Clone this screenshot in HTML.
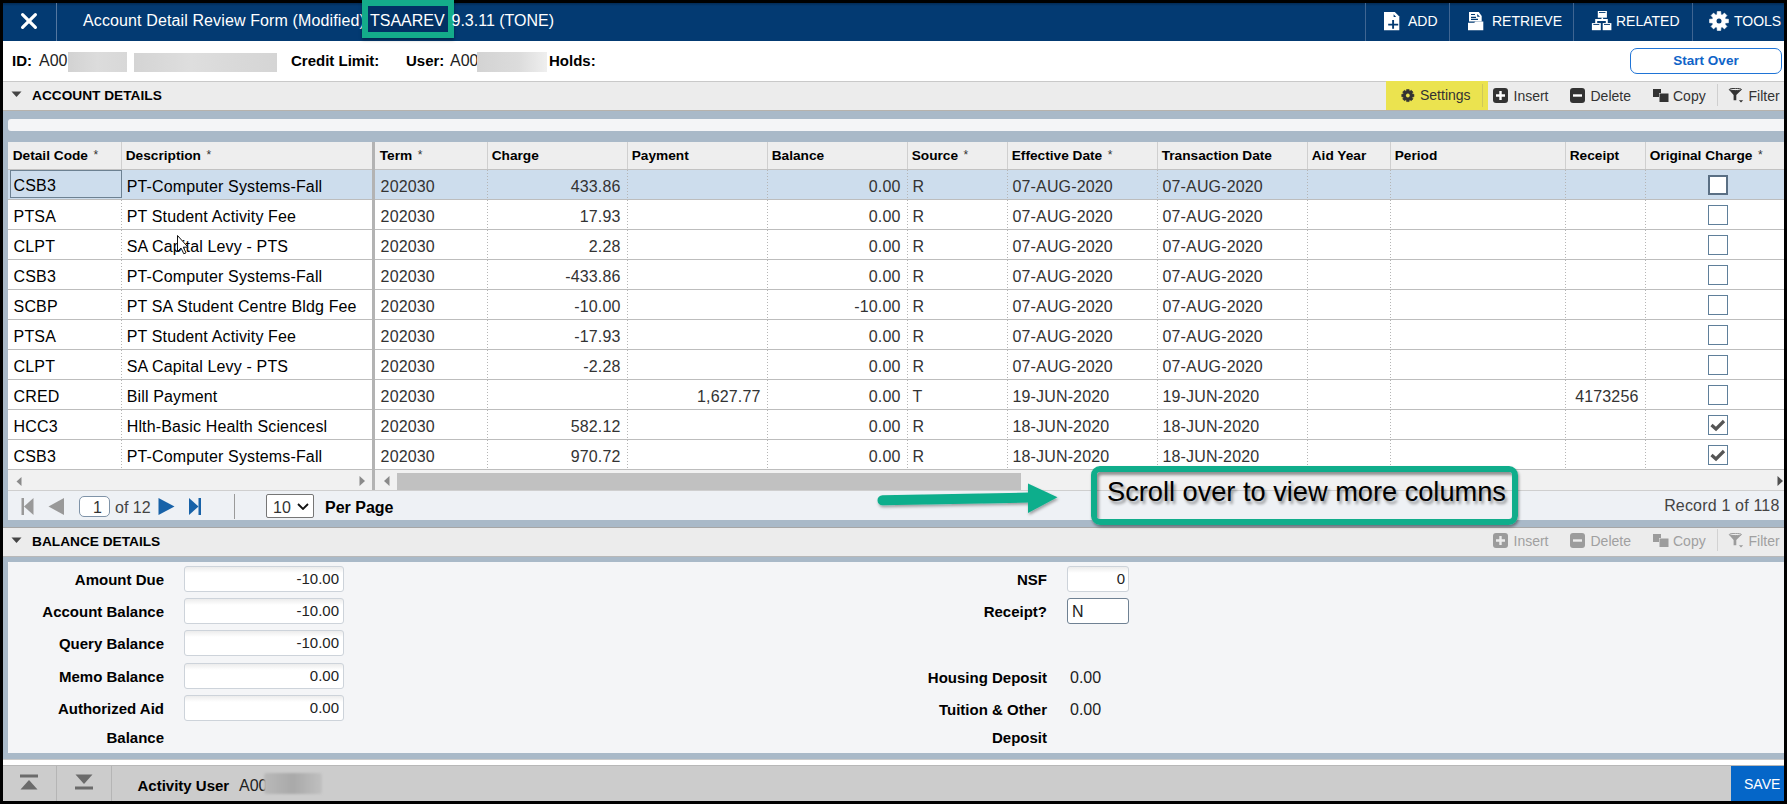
<!DOCTYPE html>
<html><head><meta charset="utf-8"><style>
html,body{margin:0;padding:0;}
body{width:1787px;height:804px;position:relative;overflow:hidden;font-family:"Liberation Sans", sans-serif;}
</style></head><body>
<div style="position:absolute;left:0px;top:0px;width:1787px;height:804px;background:#000"></div><div style="position:absolute;left:3px;top:3px;width:1781px;height:798px;background:#fff"></div><div style="position:absolute;left:3px;top:3px;width:1781px;height:38px;background:#033a72"></div><div style="position:absolute;left:3px;top:3px;width:1781px;height:3px;background:linear-gradient(#022a55,#033a72)"></div><svg style="position:absolute;left:20px;top:12px;" width="18" height="18" viewBox="0 0 18 18"><path d="M2.6 2.6 L15.4 15.4 M15.4 2.6 L2.6 15.4" stroke="#fff" stroke-width="3.2" stroke-linecap="round"/></svg><div style="position:absolute;left:56px;top:3px;width:1px;height:38px;background:#5577a0"></div><div style="position:absolute;left:83px;top:13.06px;font-size:16px;line-height:16px;font-weight:400;color:#fff;white-space:nowrap;letter-spacing:0.12px">Account Detail Review Form (Modified)</div><div style="position:absolute;left:362px;top:0px;width:92px;height:38px;box-sizing:border-box;border:6px solid #14ac8a;background:rgba(0,20,50,0.22);box-shadow:0 2px 3px rgba(0,0,0,0.35)"></div><div style="position:absolute;left:370px;top:13.06px;font-size:16px;line-height:16px;font-weight:400;color:#fff;white-space:nowrap;">TSAAREV</div><div style="position:absolute;left:451.5px;top:13.06px;font-size:16px;line-height:16px;font-weight:400;color:#fff;white-space:nowrap;">9.3.11 (TONE)</div><div style="position:absolute;left:1365px;top:3px;width:1px;height:38px;background:#3f6592"></div><div style="position:absolute;left:1449px;top:3px;width:1px;height:38px;background:#3f6592"></div><div style="position:absolute;left:1573px;top:3px;width:1px;height:38px;background:#3f6592"></div><div style="position:absolute;left:1692px;top:3px;width:1px;height:38px;background:#3f6592"></div><svg style="position:absolute;left:1383px;top:12px;" width="18" height="19" viewBox="0 0 18 19"><path d="M1 0 H11.8 L16.3 4.5 V18.3 H1 Z" fill="#fff"/><path d="M10.6 2.3 L13.2 5 H10.6 Z" fill="#033a72"/><path d="M10.1 8 V16.7 M5.2 12.65 H15.2" stroke="#033a72" stroke-width="1.9"/></svg><div style="position:absolute;left:1408px;top:13.85px;font-size:14px;line-height:14px;font-weight:400;color:#fff;white-space:nowrap;">ADD</div><svg style="position:absolute;left:1467px;top:11px;" width="18" height="20" viewBox="0 0 18 20"><path d="M2 0.9 H11.8 L14.7 5 V10.6 H2 Z" fill="#fff"/><path d="M10.2 3.1 L13 5.7 H10.2 Z" fill="#033a72"/><path d="M4 3.5 H8 M4 6.4 H9 M4 8.3 H11" stroke="#033a72" stroke-width="1.2"/><path d="M1 11.7 H7.2 L8.5 10.5 H16.3 V19.3 H1 Z" fill="#fff"/></svg><div style="position:absolute;left:1492px;top:13.85px;font-size:14px;line-height:14px;font-weight:400;color:#fff;white-space:nowrap;">RETRIEVE</div><svg style="position:absolute;left:1591px;top:11px;" width="21" height="20" viewBox="0 0 21 20"><rect x="6.8" y="0" width="9.1" height="6.7" fill="#fff"/><path d="M8 1.5 H14.5" stroke="#033a72" stroke-width="0.9"/><rect x="10.5" y="6.5" width="1.6" height="2" fill="#fff"/><path d="M5.2 12.2 V9 H15.8 V12.2" stroke="#fff" stroke-width="2" fill="none"/><rect x="0.9" y="12.1" width="8.9" height="7.1" fill="#fff"/><rect x="11.7" y="12.1" width="8.7" height="7.1" fill="#fff"/><path d="M2.3 13.5 H8.3 M13 13.5 H19" stroke="#033a72" stroke-width="0.9"/></svg><div style="position:absolute;left:1616px;top:13.85px;font-size:14px;line-height:14px;font-weight:400;color:#fff;white-space:nowrap;">RELATED</div><svg style="position:absolute;left:1708px;top:10px;" width="22" height="22" viewBox="0 0 22 22"><path d="M17.30,9.02 L20.44,9.26 L20.44,12.74 L17.30,12.98 L16.85,14.05 L18.91,16.44 L16.44,18.91 L14.05,16.85 L12.98,17.30 L12.74,20.44 L9.26,20.44 L9.02,17.30 L7.95,16.85 L5.56,18.91 L3.09,16.44 L5.15,14.05 L4.70,12.98 L1.56,12.74 L1.56,9.26 L4.70,9.02 L5.15,7.95 L3.09,5.56 L5.56,3.09 L7.95,5.15 L9.02,4.70 L9.26,1.56 L12.74,1.56 L12.98,4.70 L14.05,5.15 L16.44,3.09 L18.91,5.56 L16.85,7.95 Z" fill="#fff" stroke="#fff" stroke-width="0.6" stroke-linejoin="round"/><circle cx="11" cy="11" r="6.6" fill="#fff"/><circle cx="11" cy="11" r="2.5" fill="#033a72"/></svg><div style="position:absolute;left:1734px;top:13.85px;font-size:14px;line-height:14px;font-weight:400;color:#fff;white-space:nowrap;">TOOLS</div><div style="position:absolute;left:12px;top:53.20px;font-size:15px;line-height:15px;font-weight:700;color:#000;white-space:nowrap;">ID:</div><div style="position:absolute;left:39px;top:52.96px;font-size:16px;line-height:16px;font-weight:400;color:#222;white-space:nowrap;">A00</div><div style="position:absolute;left:68px;top:52px;width:59px;height:20px;background:linear-gradient(90deg,#d2d2d2,#dcdcdc 50%,#d8d8d8);filter:blur(0.6px)"></div><div style="position:absolute;left:134px;top:53px;width:143px;height:19px;background:linear-gradient(90deg,#d4d4d4,#dedede 40%,#d9d9d9 70%,#d5d5d5);filter:blur(0.6px)"></div><div style="position:absolute;left:291px;top:53.20px;font-size:15px;line-height:15px;font-weight:700;color:#000;white-space:nowrap;">Credit Limit:</div><div style="position:absolute;left:406px;top:53.20px;font-size:15px;line-height:15px;font-weight:700;color:#000;white-space:nowrap;">User:</div><div style="position:absolute;left:450px;top:52.96px;font-size:16px;line-height:16px;font-weight:400;color:#222;white-space:nowrap;">A00</div><div style="position:absolute;left:477px;top:52px;width:70px;height:20px;background:linear-gradient(90deg,#d3d3d3,#dcdcdc 60%,#efefef);filter:blur(0.6px)"></div><div style="position:absolute;left:549px;top:53.20px;font-size:15px;line-height:15px;font-weight:700;color:#000;white-space:nowrap;">Holds:</div><div style="position:absolute;left:1630px;top:48px;width:152px;height:26px;box-sizing:border-box;border:1.5px solid #1f74d6;border-radius:7px;background:#fff"></div><div style="position:absolute;left:1631.0px;width:150px;text-align:center;top:54.07px;font-size:13.5px;line-height:13.5px;font-weight:700;color:#0f64c8;white-space:nowrap;">Start Over</div><div style="position:absolute;left:3px;top:81px;width:1781px;height:1px;background:#c9c9c9"></div><div style="position:absolute;left:3px;top:82px;width:1781px;height:28px;background:#ececec"></div><div style="position:absolute;left:3px;top:110px;width:1781px;height:1px;background:#b6b2ac"></div><svg style="position:absolute;left:11px;top:91px;" width="11" height="7" viewBox="0 0 11 7"><path d="M0.5 0.5 H10.5 L5.5 6 Z" fill="#444"/></svg><div style="position:absolute;left:32px;top:89.40px;font-size:13.7px;line-height:13.7px;font-weight:700;color:#000;white-space:nowrap;">ACCOUNT DETAILS</div><div style="position:absolute;left:1386px;top:81px;width:102px;height:29px;background:#ebe34f"></div><div style="position:absolute;left:1482px;top:84px;width:1px;height:23px;background:#cfc85a"></div><svg style="position:absolute;left:1401px;top:89px;" width="14" height="14" viewBox="0 0 14 14"><path d="M11.18,4.95 L12.92,5.23 L12.92,7.77 L11.18,8.05 L11.01,8.47 L12.04,9.89 L10.24,11.69 L8.82,10.66 L8.40,10.83 L8.12,12.57 L5.58,12.57 L5.30,10.83 L4.88,10.66 L3.46,11.69 L1.66,9.89 L2.69,8.47 L2.52,8.05 L0.78,7.77 L0.78,5.23 L2.52,4.95 L2.69,4.53 L1.66,3.11 L3.46,1.31 L4.88,2.34 L5.30,2.17 L5.58,0.43 L8.12,0.43 L8.40,2.17 L8.82,2.34 L10.24,1.31 L12.04,3.11 L11.01,4.53 Z" fill="#333" stroke="#333" stroke-width="0.6" stroke-linejoin="round"/><circle cx="6.85" cy="6.5" r="4.6" fill="#333"/><circle cx="6.85" cy="6.5" r="1.9" fill="#ebe34f"/></svg><div style="position:absolute;left:1420px;top:88.15px;font-size:14px;line-height:14px;font-weight:400;color:#333;white-space:nowrap;">Settings</div><svg style="position:absolute;left:1493px;top:88px;" width="15" height="15" viewBox="0 0 15 15"><rect x="0" y="0" width="15" height="15" rx="3" fill="#333"/><path d="M7.5 3 V12 M3 7.5 H12" stroke="#fff" stroke-width="2.4"/></svg><div style="position:absolute;left:1513.5px;top:88.65px;font-size:14px;line-height:14px;font-weight:400;color:#333;white-space:nowrap;">Insert</div><svg style="position:absolute;left:1570px;top:88px;" width="15" height="15" viewBox="0 0 15 15"><rect x="0" y="0" width="15" height="15" rx="3" fill="#333"/><path d="M3 7.5 H12" stroke="#fff" stroke-width="2.4"/></svg><div style="position:absolute;left:1590.5px;top:88.65px;font-size:14px;line-height:14px;font-weight:400;color:#333;white-space:nowrap;">Delete</div><svg style="position:absolute;left:1653px;top:89px;" width="16" height="13" viewBox="0 0 16 13"><path d="M0 0 H8 V4 H6 V8 H0 Z" fill="#333"/><rect x="6.5" y="4.5" width="9" height="8.5" fill="#333"/></svg><div style="position:absolute;left:1673px;top:88.65px;font-size:14px;line-height:14px;font-weight:400;color:#333;white-space:nowrap;">Copy</div><div style="position:absolute;left:1717px;top:84px;width:1px;height:22px;background:#cfcfcf"></div><svg style="position:absolute;left:1728px;top:88px;" width="16" height="15" viewBox="0 0 16 15"><path d="M0.8 1.5 L5.6 7 V12.2 H8.3 V7 L13.9 1.5 Z" fill="#333"/><ellipse cx="7.35" cy="1.5" rx="6.1" ry="1.1" fill="#ececec" stroke="#333" stroke-width="1"/><path d="M10.9 12.2 H15.2 L13 14.6 Z" fill="#333"/></svg><div style="position:absolute;left:1748.5px;top:88.65px;font-size:14px;line-height:14px;font-weight:400;color:#333;white-space:nowrap;">Filter</div><div style="position:absolute;left:3px;top:111px;width:1781px;height:31px;background:#a9b9c8"></div><div style="position:absolute;left:3px;top:111px;width:5px;height:416px;background:#a9b9c8"></div><div style="position:absolute;left:8px;top:119px;width:1776px;height:12px;background:#f4f5f7;border-radius:3px 0 0 3px"></div><div style="position:absolute;left:8px;top:142px;width:1776px;height:27px;background:#eeeeee"></div><div style="position:absolute;left:8px;top:169px;width:1776px;height:1px;background:#c2c2c2"></div><div style="position:absolute;left:121px;top:142px;width:1px;height:27px;background:#cfcfcf"></div><div style="position:absolute;left:487px;top:142px;width:1px;height:27px;background:#cfcfcf"></div><div style="position:absolute;left:627px;top:142px;width:1px;height:27px;background:#cfcfcf"></div><div style="position:absolute;left:767px;top:142px;width:1px;height:27px;background:#cfcfcf"></div><div style="position:absolute;left:907px;top:142px;width:1px;height:27px;background:#cfcfcf"></div><div style="position:absolute;left:1007px;top:142px;width:1px;height:27px;background:#cfcfcf"></div><div style="position:absolute;left:1157px;top:142px;width:1px;height:27px;background:#cfcfcf"></div><div style="position:absolute;left:1307px;top:142px;width:1px;height:27px;background:#cfcfcf"></div><div style="position:absolute;left:1390px;top:142px;width:1px;height:27px;background:#cfcfcf"></div><div style="position:absolute;left:1565px;top:142px;width:1px;height:27px;background:#cfcfcf"></div><div style="position:absolute;left:1645px;top:142px;width:1px;height:27px;background:#cfcfcf"></div><div style="position:absolute;left:8px;top:170px;width:1776px;height:29px;background:#cddded"></div><div style="position:absolute;left:8px;top:199px;width:1776px;height:1px;background:#bdbdbd"></div><div style="position:absolute;left:121px;top:170px;width:1px;height:29px;background-image:linear-gradient(#b5b5b5 50%,transparent 50%);background-size:1px 3px"></div><div style="position:absolute;left:487px;top:170px;width:1px;height:29px;background-image:linear-gradient(#b5b5b5 50%,transparent 50%);background-size:1px 3px"></div><div style="position:absolute;left:627px;top:170px;width:1px;height:29px;background-image:linear-gradient(#b5b5b5 50%,transparent 50%);background-size:1px 3px"></div><div style="position:absolute;left:767px;top:170px;width:1px;height:29px;background-image:linear-gradient(#b5b5b5 50%,transparent 50%);background-size:1px 3px"></div><div style="position:absolute;left:907px;top:170px;width:1px;height:29px;background-image:linear-gradient(#b5b5b5 50%,transparent 50%);background-size:1px 3px"></div><div style="position:absolute;left:1007px;top:170px;width:1px;height:29px;background-image:linear-gradient(#b5b5b5 50%,transparent 50%);background-size:1px 3px"></div><div style="position:absolute;left:1157px;top:170px;width:1px;height:29px;background-image:linear-gradient(#b5b5b5 50%,transparent 50%);background-size:1px 3px"></div><div style="position:absolute;left:1307px;top:170px;width:1px;height:29px;background-image:linear-gradient(#b5b5b5 50%,transparent 50%);background-size:1px 3px"></div><div style="position:absolute;left:1390px;top:170px;width:1px;height:29px;background-image:linear-gradient(#b5b5b5 50%,transparent 50%);background-size:1px 3px"></div><div style="position:absolute;left:1565px;top:170px;width:1px;height:29px;background-image:linear-gradient(#b5b5b5 50%,transparent 50%);background-size:1px 3px"></div><div style="position:absolute;left:1645px;top:170px;width:1px;height:29px;background-image:linear-gradient(#b5b5b5 50%,transparent 50%);background-size:1px 3px"></div><div style="position:absolute;left:13.6px;top:178.46px;font-size:16px;line-height:16px;font-weight:400;color:#000;white-space:nowrap;letter-spacing:0.15px">CSB3</div><div style="position:absolute;left:126.7px;top:179.46px;font-size:16px;line-height:16px;font-weight:400;color:#000;white-space:nowrap;letter-spacing:0.15px">PT-Computer Systems-Fall</div><div style="position:absolute;left:380.6px;top:179.46px;font-size:16px;line-height:16px;font-weight:400;color:#333;white-space:nowrap;letter-spacing:0.15px">202030</div><div style="position:absolute;left:20.5px;width:600px;text-align:right;top:179.46px;font-size:16px;line-height:16px;font-weight:400;color:#333;white-space:nowrap;letter-spacing:0.15px">433.86</div><div style="position:absolute;left:300.5px;width:600px;text-align:right;top:179.46px;font-size:16px;line-height:16px;font-weight:400;color:#333;white-space:nowrap;letter-spacing:0.15px">0.00</div><div style="position:absolute;left:912.5px;top:179.46px;font-size:16px;line-height:16px;font-weight:400;color:#333;white-space:nowrap;letter-spacing:0.15px">R</div><div style="position:absolute;left:1012.5px;top:179.46px;font-size:16px;line-height:16px;font-weight:400;color:#333;white-space:nowrap;letter-spacing:0.15px">07-AUG-2020</div><div style="position:absolute;left:1162.5px;top:179.46px;font-size:16px;line-height:16px;font-weight:400;color:#333;white-space:nowrap;letter-spacing:0.15px">07-AUG-2020</div><div style="position:absolute;left:1708px;top:175px;width:20px;height:20px;box-sizing:border-box;border:2px solid #5a6f84;background:#fff"></div><div style="position:absolute;left:8px;top:200px;width:1776px;height:29px;background:#ffffff"></div><div style="position:absolute;left:8px;top:229px;width:1776px;height:1px;background:#bdbdbd"></div><div style="position:absolute;left:121px;top:200px;width:1px;height:29px;background-image:linear-gradient(#b5b5b5 50%,transparent 50%);background-size:1px 3px"></div><div style="position:absolute;left:487px;top:200px;width:1px;height:29px;background-image:linear-gradient(#b5b5b5 50%,transparent 50%);background-size:1px 3px"></div><div style="position:absolute;left:627px;top:200px;width:1px;height:29px;background-image:linear-gradient(#b5b5b5 50%,transparent 50%);background-size:1px 3px"></div><div style="position:absolute;left:767px;top:200px;width:1px;height:29px;background-image:linear-gradient(#b5b5b5 50%,transparent 50%);background-size:1px 3px"></div><div style="position:absolute;left:907px;top:200px;width:1px;height:29px;background-image:linear-gradient(#b5b5b5 50%,transparent 50%);background-size:1px 3px"></div><div style="position:absolute;left:1007px;top:200px;width:1px;height:29px;background-image:linear-gradient(#b5b5b5 50%,transparent 50%);background-size:1px 3px"></div><div style="position:absolute;left:1157px;top:200px;width:1px;height:29px;background-image:linear-gradient(#b5b5b5 50%,transparent 50%);background-size:1px 3px"></div><div style="position:absolute;left:1307px;top:200px;width:1px;height:29px;background-image:linear-gradient(#b5b5b5 50%,transparent 50%);background-size:1px 3px"></div><div style="position:absolute;left:1390px;top:200px;width:1px;height:29px;background-image:linear-gradient(#b5b5b5 50%,transparent 50%);background-size:1px 3px"></div><div style="position:absolute;left:1565px;top:200px;width:1px;height:29px;background-image:linear-gradient(#b5b5b5 50%,transparent 50%);background-size:1px 3px"></div><div style="position:absolute;left:1645px;top:200px;width:1px;height:29px;background-image:linear-gradient(#b5b5b5 50%,transparent 50%);background-size:1px 3px"></div><div style="position:absolute;left:13.6px;top:209.46px;font-size:16px;line-height:16px;font-weight:400;color:#000;white-space:nowrap;letter-spacing:0.15px">PTSA</div><div style="position:absolute;left:126.7px;top:209.46px;font-size:16px;line-height:16px;font-weight:400;color:#000;white-space:nowrap;letter-spacing:0.15px">PT Student Activity Fee</div><div style="position:absolute;left:380.6px;top:209.46px;font-size:16px;line-height:16px;font-weight:400;color:#333;white-space:nowrap;letter-spacing:0.15px">202030</div><div style="position:absolute;left:20.5px;width:600px;text-align:right;top:209.46px;font-size:16px;line-height:16px;font-weight:400;color:#333;white-space:nowrap;letter-spacing:0.15px">17.93</div><div style="position:absolute;left:300.5px;width:600px;text-align:right;top:209.46px;font-size:16px;line-height:16px;font-weight:400;color:#333;white-space:nowrap;letter-spacing:0.15px">0.00</div><div style="position:absolute;left:912.5px;top:209.46px;font-size:16px;line-height:16px;font-weight:400;color:#333;white-space:nowrap;letter-spacing:0.15px">R</div><div style="position:absolute;left:1012.5px;top:209.46px;font-size:16px;line-height:16px;font-weight:400;color:#333;white-space:nowrap;letter-spacing:0.15px">07-AUG-2020</div><div style="position:absolute;left:1162.5px;top:209.46px;font-size:16px;line-height:16px;font-weight:400;color:#333;white-space:nowrap;letter-spacing:0.15px">07-AUG-2020</div><div style="position:absolute;left:1708px;top:205px;width:20px;height:20px;box-sizing:border-box;border:1px solid #5f7f9a;background:#fff"></div><div style="position:absolute;left:8px;top:230px;width:1776px;height:29px;background:#ffffff"></div><div style="position:absolute;left:8px;top:259px;width:1776px;height:1px;background:#bdbdbd"></div><div style="position:absolute;left:121px;top:230px;width:1px;height:29px;background-image:linear-gradient(#b5b5b5 50%,transparent 50%);background-size:1px 3px"></div><div style="position:absolute;left:487px;top:230px;width:1px;height:29px;background-image:linear-gradient(#b5b5b5 50%,transparent 50%);background-size:1px 3px"></div><div style="position:absolute;left:627px;top:230px;width:1px;height:29px;background-image:linear-gradient(#b5b5b5 50%,transparent 50%);background-size:1px 3px"></div><div style="position:absolute;left:767px;top:230px;width:1px;height:29px;background-image:linear-gradient(#b5b5b5 50%,transparent 50%);background-size:1px 3px"></div><div style="position:absolute;left:907px;top:230px;width:1px;height:29px;background-image:linear-gradient(#b5b5b5 50%,transparent 50%);background-size:1px 3px"></div><div style="position:absolute;left:1007px;top:230px;width:1px;height:29px;background-image:linear-gradient(#b5b5b5 50%,transparent 50%);background-size:1px 3px"></div><div style="position:absolute;left:1157px;top:230px;width:1px;height:29px;background-image:linear-gradient(#b5b5b5 50%,transparent 50%);background-size:1px 3px"></div><div style="position:absolute;left:1307px;top:230px;width:1px;height:29px;background-image:linear-gradient(#b5b5b5 50%,transparent 50%);background-size:1px 3px"></div><div style="position:absolute;left:1390px;top:230px;width:1px;height:29px;background-image:linear-gradient(#b5b5b5 50%,transparent 50%);background-size:1px 3px"></div><div style="position:absolute;left:1565px;top:230px;width:1px;height:29px;background-image:linear-gradient(#b5b5b5 50%,transparent 50%);background-size:1px 3px"></div><div style="position:absolute;left:1645px;top:230px;width:1px;height:29px;background-image:linear-gradient(#b5b5b5 50%,transparent 50%);background-size:1px 3px"></div><div style="position:absolute;left:13.6px;top:239.46px;font-size:16px;line-height:16px;font-weight:400;color:#000;white-space:nowrap;letter-spacing:0.15px">CLPT</div><div style="position:absolute;left:126.7px;top:239.46px;font-size:16px;line-height:16px;font-weight:400;color:#000;white-space:nowrap;letter-spacing:0.15px">SA Capital Levy - PTS</div><div style="position:absolute;left:380.6px;top:239.46px;font-size:16px;line-height:16px;font-weight:400;color:#333;white-space:nowrap;letter-spacing:0.15px">202030</div><div style="position:absolute;left:20.5px;width:600px;text-align:right;top:239.46px;font-size:16px;line-height:16px;font-weight:400;color:#333;white-space:nowrap;letter-spacing:0.15px">2.28</div><div style="position:absolute;left:300.5px;width:600px;text-align:right;top:239.46px;font-size:16px;line-height:16px;font-weight:400;color:#333;white-space:nowrap;letter-spacing:0.15px">0.00</div><div style="position:absolute;left:912.5px;top:239.46px;font-size:16px;line-height:16px;font-weight:400;color:#333;white-space:nowrap;letter-spacing:0.15px">R</div><div style="position:absolute;left:1012.5px;top:239.46px;font-size:16px;line-height:16px;font-weight:400;color:#333;white-space:nowrap;letter-spacing:0.15px">07-AUG-2020</div><div style="position:absolute;left:1162.5px;top:239.46px;font-size:16px;line-height:16px;font-weight:400;color:#333;white-space:nowrap;letter-spacing:0.15px">07-AUG-2020</div><div style="position:absolute;left:1708px;top:235px;width:20px;height:20px;box-sizing:border-box;border:1px solid #5f7f9a;background:#fff"></div><div style="position:absolute;left:8px;top:260px;width:1776px;height:29px;background:#ffffff"></div><div style="position:absolute;left:8px;top:289px;width:1776px;height:1px;background:#bdbdbd"></div><div style="position:absolute;left:121px;top:260px;width:1px;height:29px;background-image:linear-gradient(#b5b5b5 50%,transparent 50%);background-size:1px 3px"></div><div style="position:absolute;left:487px;top:260px;width:1px;height:29px;background-image:linear-gradient(#b5b5b5 50%,transparent 50%);background-size:1px 3px"></div><div style="position:absolute;left:627px;top:260px;width:1px;height:29px;background-image:linear-gradient(#b5b5b5 50%,transparent 50%);background-size:1px 3px"></div><div style="position:absolute;left:767px;top:260px;width:1px;height:29px;background-image:linear-gradient(#b5b5b5 50%,transparent 50%);background-size:1px 3px"></div><div style="position:absolute;left:907px;top:260px;width:1px;height:29px;background-image:linear-gradient(#b5b5b5 50%,transparent 50%);background-size:1px 3px"></div><div style="position:absolute;left:1007px;top:260px;width:1px;height:29px;background-image:linear-gradient(#b5b5b5 50%,transparent 50%);background-size:1px 3px"></div><div style="position:absolute;left:1157px;top:260px;width:1px;height:29px;background-image:linear-gradient(#b5b5b5 50%,transparent 50%);background-size:1px 3px"></div><div style="position:absolute;left:1307px;top:260px;width:1px;height:29px;background-image:linear-gradient(#b5b5b5 50%,transparent 50%);background-size:1px 3px"></div><div style="position:absolute;left:1390px;top:260px;width:1px;height:29px;background-image:linear-gradient(#b5b5b5 50%,transparent 50%);background-size:1px 3px"></div><div style="position:absolute;left:1565px;top:260px;width:1px;height:29px;background-image:linear-gradient(#b5b5b5 50%,transparent 50%);background-size:1px 3px"></div><div style="position:absolute;left:1645px;top:260px;width:1px;height:29px;background-image:linear-gradient(#b5b5b5 50%,transparent 50%);background-size:1px 3px"></div><div style="position:absolute;left:13.6px;top:269.46px;font-size:16px;line-height:16px;font-weight:400;color:#000;white-space:nowrap;letter-spacing:0.15px">CSB3</div><div style="position:absolute;left:126.7px;top:269.46px;font-size:16px;line-height:16px;font-weight:400;color:#000;white-space:nowrap;letter-spacing:0.15px">PT-Computer Systems-Fall</div><div style="position:absolute;left:380.6px;top:269.46px;font-size:16px;line-height:16px;font-weight:400;color:#333;white-space:nowrap;letter-spacing:0.15px">202030</div><div style="position:absolute;left:20.5px;width:600px;text-align:right;top:269.46px;font-size:16px;line-height:16px;font-weight:400;color:#333;white-space:nowrap;letter-spacing:0.15px">-433.86</div><div style="position:absolute;left:300.5px;width:600px;text-align:right;top:269.46px;font-size:16px;line-height:16px;font-weight:400;color:#333;white-space:nowrap;letter-spacing:0.15px">0.00</div><div style="position:absolute;left:912.5px;top:269.46px;font-size:16px;line-height:16px;font-weight:400;color:#333;white-space:nowrap;letter-spacing:0.15px">R</div><div style="position:absolute;left:1012.5px;top:269.46px;font-size:16px;line-height:16px;font-weight:400;color:#333;white-space:nowrap;letter-spacing:0.15px">07-AUG-2020</div><div style="position:absolute;left:1162.5px;top:269.46px;font-size:16px;line-height:16px;font-weight:400;color:#333;white-space:nowrap;letter-spacing:0.15px">07-AUG-2020</div><div style="position:absolute;left:1708px;top:265px;width:20px;height:20px;box-sizing:border-box;border:1px solid #5f7f9a;background:#fff"></div><div style="position:absolute;left:8px;top:290px;width:1776px;height:29px;background:#ffffff"></div><div style="position:absolute;left:8px;top:319px;width:1776px;height:1px;background:#bdbdbd"></div><div style="position:absolute;left:121px;top:290px;width:1px;height:29px;background-image:linear-gradient(#b5b5b5 50%,transparent 50%);background-size:1px 3px"></div><div style="position:absolute;left:487px;top:290px;width:1px;height:29px;background-image:linear-gradient(#b5b5b5 50%,transparent 50%);background-size:1px 3px"></div><div style="position:absolute;left:627px;top:290px;width:1px;height:29px;background-image:linear-gradient(#b5b5b5 50%,transparent 50%);background-size:1px 3px"></div><div style="position:absolute;left:767px;top:290px;width:1px;height:29px;background-image:linear-gradient(#b5b5b5 50%,transparent 50%);background-size:1px 3px"></div><div style="position:absolute;left:907px;top:290px;width:1px;height:29px;background-image:linear-gradient(#b5b5b5 50%,transparent 50%);background-size:1px 3px"></div><div style="position:absolute;left:1007px;top:290px;width:1px;height:29px;background-image:linear-gradient(#b5b5b5 50%,transparent 50%);background-size:1px 3px"></div><div style="position:absolute;left:1157px;top:290px;width:1px;height:29px;background-image:linear-gradient(#b5b5b5 50%,transparent 50%);background-size:1px 3px"></div><div style="position:absolute;left:1307px;top:290px;width:1px;height:29px;background-image:linear-gradient(#b5b5b5 50%,transparent 50%);background-size:1px 3px"></div><div style="position:absolute;left:1390px;top:290px;width:1px;height:29px;background-image:linear-gradient(#b5b5b5 50%,transparent 50%);background-size:1px 3px"></div><div style="position:absolute;left:1565px;top:290px;width:1px;height:29px;background-image:linear-gradient(#b5b5b5 50%,transparent 50%);background-size:1px 3px"></div><div style="position:absolute;left:1645px;top:290px;width:1px;height:29px;background-image:linear-gradient(#b5b5b5 50%,transparent 50%);background-size:1px 3px"></div><div style="position:absolute;left:13.6px;top:299.46px;font-size:16px;line-height:16px;font-weight:400;color:#000;white-space:nowrap;letter-spacing:0.15px">SCBP</div><div style="position:absolute;left:126.7px;top:299.46px;font-size:16px;line-height:16px;font-weight:400;color:#000;white-space:nowrap;letter-spacing:0.15px">PT SA Student Centre Bldg Fee</div><div style="position:absolute;left:380.6px;top:299.46px;font-size:16px;line-height:16px;font-weight:400;color:#333;white-space:nowrap;letter-spacing:0.15px">202030</div><div style="position:absolute;left:20.5px;width:600px;text-align:right;top:299.46px;font-size:16px;line-height:16px;font-weight:400;color:#333;white-space:nowrap;letter-spacing:0.15px">-10.00</div><div style="position:absolute;left:300.5px;width:600px;text-align:right;top:299.46px;font-size:16px;line-height:16px;font-weight:400;color:#333;white-space:nowrap;letter-spacing:0.15px">-10.00</div><div style="position:absolute;left:912.5px;top:299.46px;font-size:16px;line-height:16px;font-weight:400;color:#333;white-space:nowrap;letter-spacing:0.15px">R</div><div style="position:absolute;left:1012.5px;top:299.46px;font-size:16px;line-height:16px;font-weight:400;color:#333;white-space:nowrap;letter-spacing:0.15px">07-AUG-2020</div><div style="position:absolute;left:1162.5px;top:299.46px;font-size:16px;line-height:16px;font-weight:400;color:#333;white-space:nowrap;letter-spacing:0.15px">07-AUG-2020</div><div style="position:absolute;left:1708px;top:295px;width:20px;height:20px;box-sizing:border-box;border:1px solid #5f7f9a;background:#fff"></div><div style="position:absolute;left:8px;top:320px;width:1776px;height:29px;background:#ffffff"></div><div style="position:absolute;left:8px;top:349px;width:1776px;height:1px;background:#bdbdbd"></div><div style="position:absolute;left:121px;top:320px;width:1px;height:29px;background-image:linear-gradient(#b5b5b5 50%,transparent 50%);background-size:1px 3px"></div><div style="position:absolute;left:487px;top:320px;width:1px;height:29px;background-image:linear-gradient(#b5b5b5 50%,transparent 50%);background-size:1px 3px"></div><div style="position:absolute;left:627px;top:320px;width:1px;height:29px;background-image:linear-gradient(#b5b5b5 50%,transparent 50%);background-size:1px 3px"></div><div style="position:absolute;left:767px;top:320px;width:1px;height:29px;background-image:linear-gradient(#b5b5b5 50%,transparent 50%);background-size:1px 3px"></div><div style="position:absolute;left:907px;top:320px;width:1px;height:29px;background-image:linear-gradient(#b5b5b5 50%,transparent 50%);background-size:1px 3px"></div><div style="position:absolute;left:1007px;top:320px;width:1px;height:29px;background-image:linear-gradient(#b5b5b5 50%,transparent 50%);background-size:1px 3px"></div><div style="position:absolute;left:1157px;top:320px;width:1px;height:29px;background-image:linear-gradient(#b5b5b5 50%,transparent 50%);background-size:1px 3px"></div><div style="position:absolute;left:1307px;top:320px;width:1px;height:29px;background-image:linear-gradient(#b5b5b5 50%,transparent 50%);background-size:1px 3px"></div><div style="position:absolute;left:1390px;top:320px;width:1px;height:29px;background-image:linear-gradient(#b5b5b5 50%,transparent 50%);background-size:1px 3px"></div><div style="position:absolute;left:1565px;top:320px;width:1px;height:29px;background-image:linear-gradient(#b5b5b5 50%,transparent 50%);background-size:1px 3px"></div><div style="position:absolute;left:1645px;top:320px;width:1px;height:29px;background-image:linear-gradient(#b5b5b5 50%,transparent 50%);background-size:1px 3px"></div><div style="position:absolute;left:13.6px;top:329.46px;font-size:16px;line-height:16px;font-weight:400;color:#000;white-space:nowrap;letter-spacing:0.15px">PTSA</div><div style="position:absolute;left:126.7px;top:329.46px;font-size:16px;line-height:16px;font-weight:400;color:#000;white-space:nowrap;letter-spacing:0.15px">PT Student Activity Fee</div><div style="position:absolute;left:380.6px;top:329.46px;font-size:16px;line-height:16px;font-weight:400;color:#333;white-space:nowrap;letter-spacing:0.15px">202030</div><div style="position:absolute;left:20.5px;width:600px;text-align:right;top:329.46px;font-size:16px;line-height:16px;font-weight:400;color:#333;white-space:nowrap;letter-spacing:0.15px">-17.93</div><div style="position:absolute;left:300.5px;width:600px;text-align:right;top:329.46px;font-size:16px;line-height:16px;font-weight:400;color:#333;white-space:nowrap;letter-spacing:0.15px">0.00</div><div style="position:absolute;left:912.5px;top:329.46px;font-size:16px;line-height:16px;font-weight:400;color:#333;white-space:nowrap;letter-spacing:0.15px">R</div><div style="position:absolute;left:1012.5px;top:329.46px;font-size:16px;line-height:16px;font-weight:400;color:#333;white-space:nowrap;letter-spacing:0.15px">07-AUG-2020</div><div style="position:absolute;left:1162.5px;top:329.46px;font-size:16px;line-height:16px;font-weight:400;color:#333;white-space:nowrap;letter-spacing:0.15px">07-AUG-2020</div><div style="position:absolute;left:1708px;top:325px;width:20px;height:20px;box-sizing:border-box;border:1px solid #5f7f9a;background:#fff"></div><div style="position:absolute;left:8px;top:350px;width:1776px;height:29px;background:#ffffff"></div><div style="position:absolute;left:8px;top:379px;width:1776px;height:1px;background:#bdbdbd"></div><div style="position:absolute;left:121px;top:350px;width:1px;height:29px;background-image:linear-gradient(#b5b5b5 50%,transparent 50%);background-size:1px 3px"></div><div style="position:absolute;left:487px;top:350px;width:1px;height:29px;background-image:linear-gradient(#b5b5b5 50%,transparent 50%);background-size:1px 3px"></div><div style="position:absolute;left:627px;top:350px;width:1px;height:29px;background-image:linear-gradient(#b5b5b5 50%,transparent 50%);background-size:1px 3px"></div><div style="position:absolute;left:767px;top:350px;width:1px;height:29px;background-image:linear-gradient(#b5b5b5 50%,transparent 50%);background-size:1px 3px"></div><div style="position:absolute;left:907px;top:350px;width:1px;height:29px;background-image:linear-gradient(#b5b5b5 50%,transparent 50%);background-size:1px 3px"></div><div style="position:absolute;left:1007px;top:350px;width:1px;height:29px;background-image:linear-gradient(#b5b5b5 50%,transparent 50%);background-size:1px 3px"></div><div style="position:absolute;left:1157px;top:350px;width:1px;height:29px;background-image:linear-gradient(#b5b5b5 50%,transparent 50%);background-size:1px 3px"></div><div style="position:absolute;left:1307px;top:350px;width:1px;height:29px;background-image:linear-gradient(#b5b5b5 50%,transparent 50%);background-size:1px 3px"></div><div style="position:absolute;left:1390px;top:350px;width:1px;height:29px;background-image:linear-gradient(#b5b5b5 50%,transparent 50%);background-size:1px 3px"></div><div style="position:absolute;left:1565px;top:350px;width:1px;height:29px;background-image:linear-gradient(#b5b5b5 50%,transparent 50%);background-size:1px 3px"></div><div style="position:absolute;left:1645px;top:350px;width:1px;height:29px;background-image:linear-gradient(#b5b5b5 50%,transparent 50%);background-size:1px 3px"></div><div style="position:absolute;left:13.6px;top:359.46px;font-size:16px;line-height:16px;font-weight:400;color:#000;white-space:nowrap;letter-spacing:0.15px">CLPT</div><div style="position:absolute;left:126.7px;top:359.46px;font-size:16px;line-height:16px;font-weight:400;color:#000;white-space:nowrap;letter-spacing:0.15px">SA Capital Levy - PTS</div><div style="position:absolute;left:380.6px;top:359.46px;font-size:16px;line-height:16px;font-weight:400;color:#333;white-space:nowrap;letter-spacing:0.15px">202030</div><div style="position:absolute;left:20.5px;width:600px;text-align:right;top:359.46px;font-size:16px;line-height:16px;font-weight:400;color:#333;white-space:nowrap;letter-spacing:0.15px">-2.28</div><div style="position:absolute;left:300.5px;width:600px;text-align:right;top:359.46px;font-size:16px;line-height:16px;font-weight:400;color:#333;white-space:nowrap;letter-spacing:0.15px">0.00</div><div style="position:absolute;left:912.5px;top:359.46px;font-size:16px;line-height:16px;font-weight:400;color:#333;white-space:nowrap;letter-spacing:0.15px">R</div><div style="position:absolute;left:1012.5px;top:359.46px;font-size:16px;line-height:16px;font-weight:400;color:#333;white-space:nowrap;letter-spacing:0.15px">07-AUG-2020</div><div style="position:absolute;left:1162.5px;top:359.46px;font-size:16px;line-height:16px;font-weight:400;color:#333;white-space:nowrap;letter-spacing:0.15px">07-AUG-2020</div><div style="position:absolute;left:1708px;top:355px;width:20px;height:20px;box-sizing:border-box;border:1px solid #5f7f9a;background:#fff"></div><div style="position:absolute;left:8px;top:380px;width:1776px;height:29px;background:#ffffff"></div><div style="position:absolute;left:8px;top:409px;width:1776px;height:1px;background:#bdbdbd"></div><div style="position:absolute;left:121px;top:380px;width:1px;height:29px;background-image:linear-gradient(#b5b5b5 50%,transparent 50%);background-size:1px 3px"></div><div style="position:absolute;left:487px;top:380px;width:1px;height:29px;background-image:linear-gradient(#b5b5b5 50%,transparent 50%);background-size:1px 3px"></div><div style="position:absolute;left:627px;top:380px;width:1px;height:29px;background-image:linear-gradient(#b5b5b5 50%,transparent 50%);background-size:1px 3px"></div><div style="position:absolute;left:767px;top:380px;width:1px;height:29px;background-image:linear-gradient(#b5b5b5 50%,transparent 50%);background-size:1px 3px"></div><div style="position:absolute;left:907px;top:380px;width:1px;height:29px;background-image:linear-gradient(#b5b5b5 50%,transparent 50%);background-size:1px 3px"></div><div style="position:absolute;left:1007px;top:380px;width:1px;height:29px;background-image:linear-gradient(#b5b5b5 50%,transparent 50%);background-size:1px 3px"></div><div style="position:absolute;left:1157px;top:380px;width:1px;height:29px;background-image:linear-gradient(#b5b5b5 50%,transparent 50%);background-size:1px 3px"></div><div style="position:absolute;left:1307px;top:380px;width:1px;height:29px;background-image:linear-gradient(#b5b5b5 50%,transparent 50%);background-size:1px 3px"></div><div style="position:absolute;left:1390px;top:380px;width:1px;height:29px;background-image:linear-gradient(#b5b5b5 50%,transparent 50%);background-size:1px 3px"></div><div style="position:absolute;left:1565px;top:380px;width:1px;height:29px;background-image:linear-gradient(#b5b5b5 50%,transparent 50%);background-size:1px 3px"></div><div style="position:absolute;left:1645px;top:380px;width:1px;height:29px;background-image:linear-gradient(#b5b5b5 50%,transparent 50%);background-size:1px 3px"></div><div style="position:absolute;left:13.6px;top:389.46px;font-size:16px;line-height:16px;font-weight:400;color:#000;white-space:nowrap;letter-spacing:0.15px">CRED</div><div style="position:absolute;left:126.7px;top:389.46px;font-size:16px;line-height:16px;font-weight:400;color:#000;white-space:nowrap;letter-spacing:0.15px">Bill Payment</div><div style="position:absolute;left:380.6px;top:389.46px;font-size:16px;line-height:16px;font-weight:400;color:#333;white-space:nowrap;letter-spacing:0.15px">202030</div><div style="position:absolute;left:160.5px;width:600px;text-align:right;top:389.46px;font-size:16px;line-height:16px;font-weight:400;color:#333;white-space:nowrap;letter-spacing:0.15px">1,627.77</div><div style="position:absolute;left:300.5px;width:600px;text-align:right;top:389.46px;font-size:16px;line-height:16px;font-weight:400;color:#333;white-space:nowrap;letter-spacing:0.15px">0.00</div><div style="position:absolute;left:912.5px;top:389.46px;font-size:16px;line-height:16px;font-weight:400;color:#333;white-space:nowrap;letter-spacing:0.15px">T</div><div style="position:absolute;left:1012.5px;top:389.46px;font-size:16px;line-height:16px;font-weight:400;color:#333;white-space:nowrap;letter-spacing:0.15px">19-JUN-2020</div><div style="position:absolute;left:1162.5px;top:389.46px;font-size:16px;line-height:16px;font-weight:400;color:#333;white-space:nowrap;letter-spacing:0.15px">19-JUN-2020</div><div style="position:absolute;left:1038.5px;width:600px;text-align:right;top:389.46px;font-size:16px;line-height:16px;font-weight:400;color:#333;white-space:nowrap;letter-spacing:0.15px">4173256</div><div style="position:absolute;left:1708px;top:385px;width:20px;height:20px;box-sizing:border-box;border:1px solid #5f7f9a;background:#fff"></div><div style="position:absolute;left:8px;top:410px;width:1776px;height:29px;background:#ffffff"></div><div style="position:absolute;left:8px;top:439px;width:1776px;height:1px;background:#bdbdbd"></div><div style="position:absolute;left:121px;top:410px;width:1px;height:29px;background-image:linear-gradient(#b5b5b5 50%,transparent 50%);background-size:1px 3px"></div><div style="position:absolute;left:487px;top:410px;width:1px;height:29px;background-image:linear-gradient(#b5b5b5 50%,transparent 50%);background-size:1px 3px"></div><div style="position:absolute;left:627px;top:410px;width:1px;height:29px;background-image:linear-gradient(#b5b5b5 50%,transparent 50%);background-size:1px 3px"></div><div style="position:absolute;left:767px;top:410px;width:1px;height:29px;background-image:linear-gradient(#b5b5b5 50%,transparent 50%);background-size:1px 3px"></div><div style="position:absolute;left:907px;top:410px;width:1px;height:29px;background-image:linear-gradient(#b5b5b5 50%,transparent 50%);background-size:1px 3px"></div><div style="position:absolute;left:1007px;top:410px;width:1px;height:29px;background-image:linear-gradient(#b5b5b5 50%,transparent 50%);background-size:1px 3px"></div><div style="position:absolute;left:1157px;top:410px;width:1px;height:29px;background-image:linear-gradient(#b5b5b5 50%,transparent 50%);background-size:1px 3px"></div><div style="position:absolute;left:1307px;top:410px;width:1px;height:29px;background-image:linear-gradient(#b5b5b5 50%,transparent 50%);background-size:1px 3px"></div><div style="position:absolute;left:1390px;top:410px;width:1px;height:29px;background-image:linear-gradient(#b5b5b5 50%,transparent 50%);background-size:1px 3px"></div><div style="position:absolute;left:1565px;top:410px;width:1px;height:29px;background-image:linear-gradient(#b5b5b5 50%,transparent 50%);background-size:1px 3px"></div><div style="position:absolute;left:1645px;top:410px;width:1px;height:29px;background-image:linear-gradient(#b5b5b5 50%,transparent 50%);background-size:1px 3px"></div><div style="position:absolute;left:13.6px;top:419.46px;font-size:16px;line-height:16px;font-weight:400;color:#000;white-space:nowrap;letter-spacing:0.15px">HCC3</div><div style="position:absolute;left:126.7px;top:419.46px;font-size:16px;line-height:16px;font-weight:400;color:#000;white-space:nowrap;letter-spacing:0.15px">Hlth-Basic Health Sciencesl</div><div style="position:absolute;left:380.6px;top:419.46px;font-size:16px;line-height:16px;font-weight:400;color:#333;white-space:nowrap;letter-spacing:0.15px">202030</div><div style="position:absolute;left:20.5px;width:600px;text-align:right;top:419.46px;font-size:16px;line-height:16px;font-weight:400;color:#333;white-space:nowrap;letter-spacing:0.15px">582.12</div><div style="position:absolute;left:300.5px;width:600px;text-align:right;top:419.46px;font-size:16px;line-height:16px;font-weight:400;color:#333;white-space:nowrap;letter-spacing:0.15px">0.00</div><div style="position:absolute;left:912.5px;top:419.46px;font-size:16px;line-height:16px;font-weight:400;color:#333;white-space:nowrap;letter-spacing:0.15px">R</div><div style="position:absolute;left:1012.5px;top:419.46px;font-size:16px;line-height:16px;font-weight:400;color:#333;white-space:nowrap;letter-spacing:0.15px">18-JUN-2020</div><div style="position:absolute;left:1162.5px;top:419.46px;font-size:16px;line-height:16px;font-weight:400;color:#333;white-space:nowrap;letter-spacing:0.15px">18-JUN-2020</div><div style="position:absolute;left:1708px;top:415px;width:20px;height:20px;box-sizing:border-box;border:1px solid #5f7f9a;background:#fff"></div><svg style="position:absolute;left:1708px;top:415px;" width="20" height="20" viewBox="0 0 20 20"><path d="M3.5 10 L8 14 L16 6" stroke="#555" stroke-width="3.2" fill="none"/></svg><div style="position:absolute;left:8px;top:440px;width:1776px;height:29px;background:#ffffff"></div><div style="position:absolute;left:8px;top:469px;width:1776px;height:1px;background:#bdbdbd"></div><div style="position:absolute;left:121px;top:440px;width:1px;height:29px;background-image:linear-gradient(#b5b5b5 50%,transparent 50%);background-size:1px 3px"></div><div style="position:absolute;left:487px;top:440px;width:1px;height:29px;background-image:linear-gradient(#b5b5b5 50%,transparent 50%);background-size:1px 3px"></div><div style="position:absolute;left:627px;top:440px;width:1px;height:29px;background-image:linear-gradient(#b5b5b5 50%,transparent 50%);background-size:1px 3px"></div><div style="position:absolute;left:767px;top:440px;width:1px;height:29px;background-image:linear-gradient(#b5b5b5 50%,transparent 50%);background-size:1px 3px"></div><div style="position:absolute;left:907px;top:440px;width:1px;height:29px;background-image:linear-gradient(#b5b5b5 50%,transparent 50%);background-size:1px 3px"></div><div style="position:absolute;left:1007px;top:440px;width:1px;height:29px;background-image:linear-gradient(#b5b5b5 50%,transparent 50%);background-size:1px 3px"></div><div style="position:absolute;left:1157px;top:440px;width:1px;height:29px;background-image:linear-gradient(#b5b5b5 50%,transparent 50%);background-size:1px 3px"></div><div style="position:absolute;left:1307px;top:440px;width:1px;height:29px;background-image:linear-gradient(#b5b5b5 50%,transparent 50%);background-size:1px 3px"></div><div style="position:absolute;left:1390px;top:440px;width:1px;height:29px;background-image:linear-gradient(#b5b5b5 50%,transparent 50%);background-size:1px 3px"></div><div style="position:absolute;left:1565px;top:440px;width:1px;height:29px;background-image:linear-gradient(#b5b5b5 50%,transparent 50%);background-size:1px 3px"></div><div style="position:absolute;left:1645px;top:440px;width:1px;height:29px;background-image:linear-gradient(#b5b5b5 50%,transparent 50%);background-size:1px 3px"></div><div style="position:absolute;left:13.6px;top:449.46px;font-size:16px;line-height:16px;font-weight:400;color:#000;white-space:nowrap;letter-spacing:0.15px">CSB3</div><div style="position:absolute;left:126.7px;top:449.46px;font-size:16px;line-height:16px;font-weight:400;color:#000;white-space:nowrap;letter-spacing:0.15px">PT-Computer Systems-Fall</div><div style="position:absolute;left:380.6px;top:449.46px;font-size:16px;line-height:16px;font-weight:400;color:#333;white-space:nowrap;letter-spacing:0.15px">202030</div><div style="position:absolute;left:20.5px;width:600px;text-align:right;top:449.46px;font-size:16px;line-height:16px;font-weight:400;color:#333;white-space:nowrap;letter-spacing:0.15px">970.72</div><div style="position:absolute;left:300.5px;width:600px;text-align:right;top:449.46px;font-size:16px;line-height:16px;font-weight:400;color:#333;white-space:nowrap;letter-spacing:0.15px">0.00</div><div style="position:absolute;left:912.5px;top:449.46px;font-size:16px;line-height:16px;font-weight:400;color:#333;white-space:nowrap;letter-spacing:0.15px">R</div><div style="position:absolute;left:1012.5px;top:449.46px;font-size:16px;line-height:16px;font-weight:400;color:#333;white-space:nowrap;letter-spacing:0.15px">18-JUN-2020</div><div style="position:absolute;left:1162.5px;top:449.46px;font-size:16px;line-height:16px;font-weight:400;color:#333;white-space:nowrap;letter-spacing:0.15px">18-JUN-2020</div><div style="position:absolute;left:1708px;top:445px;width:20px;height:20px;box-sizing:border-box;border:1px solid #5f7f9a;background:#fff"></div><svg style="position:absolute;left:1708px;top:445px;" width="20" height="20" viewBox="0 0 20 20"><path d="M3.5 10 L8 14 L16 6" stroke="#555" stroke-width="3.2" fill="none"/></svg><div style="position:absolute;left:10px;top:170px;width:112px;height:28px;box-sizing:border-box;border:1.5px solid #6d8192;background:transparent"></div><div style="position:absolute;left:12.7px;top:148.60px;font-size:13.7px;line-height:13.7px;font-weight:700;color:#000;white-space:nowrap;">Detail Code<span style="font-weight:400;font-size:12px;margin-left:5.5px;position:relative;top:-1px;color:#333">*</span></div><div style="position:absolute;left:125.7px;top:148.60px;font-size:13.7px;line-height:13.7px;font-weight:700;color:#000;white-space:nowrap;">Description<span style="font-weight:400;font-size:12px;margin-left:5.5px;position:relative;top:-1px;color:#333">*</span></div><div style="position:absolute;left:379.7px;top:148.60px;font-size:13.7px;line-height:13.7px;font-weight:700;color:#000;white-space:nowrap;">Term<span style="font-weight:400;font-size:12px;margin-left:5.5px;position:relative;top:-1px;color:#333">*</span></div><div style="position:absolute;left:491.7px;top:148.60px;font-size:13.7px;line-height:13.7px;font-weight:700;color:#000;white-space:nowrap;">Charge</div><div style="position:absolute;left:631.7px;top:148.60px;font-size:13.7px;line-height:13.7px;font-weight:700;color:#000;white-space:nowrap;">Payment</div><div style="position:absolute;left:771.7px;top:148.60px;font-size:13.7px;line-height:13.7px;font-weight:700;color:#000;white-space:nowrap;">Balance</div><div style="position:absolute;left:911.7px;top:148.60px;font-size:13.7px;line-height:13.7px;font-weight:700;color:#000;white-space:nowrap;">Source<span style="font-weight:400;font-size:12px;margin-left:5.5px;position:relative;top:-1px;color:#333">*</span></div><div style="position:absolute;left:1011.7px;top:148.60px;font-size:13.7px;line-height:13.7px;font-weight:700;color:#000;white-space:nowrap;">Effective Date<span style="font-weight:400;font-size:12px;margin-left:5.5px;position:relative;top:-1px;color:#333">*</span></div><div style="position:absolute;left:1161.7px;top:148.60px;font-size:13.7px;line-height:13.7px;font-weight:700;color:#000;white-space:nowrap;">Transaction Date</div><div style="position:absolute;left:1311.7px;top:148.60px;font-size:13.7px;line-height:13.7px;font-weight:700;color:#000;white-space:nowrap;">Aid Year</div><div style="position:absolute;left:1394.7px;top:148.60px;font-size:13.7px;line-height:13.7px;font-weight:700;color:#000;white-space:nowrap;">Period</div><div style="position:absolute;left:1569.7px;top:148.60px;font-size:13.7px;line-height:13.7px;font-weight:700;color:#000;white-space:nowrap;">Receipt</div><div style="position:absolute;left:1649.7px;top:148.60px;font-size:13.7px;line-height:13.7px;font-weight:700;color:#000;white-space:nowrap;">Original Charge<span style="font-weight:400;font-size:12px;margin-left:5.5px;position:relative;top:-1px;color:#333">*</span></div><div style="position:absolute;left:372px;top:142px;width:3px;height:348px;background:#b3b3b3"></div><div style="position:absolute;left:8px;top:470px;width:364px;height:20px;background:#f1f1f1"></div><div style="position:absolute;left:375px;top:470px;width:1409px;height:20px;background:#f1f1f1"></div><div style="position:absolute;left:8px;top:490px;width:1776px;height:1px;background:#cfcfcf"></div><svg style="position:absolute;left:16px;top:477px;" width="6" height="10" viewBox="0 0 6 10"><path d="M5.5 0 V9 L0.5 4.5 Z" fill="#8a8a8a"/></svg><svg style="position:absolute;left:359px;top:476px;" width="6" height="10" viewBox="0 0 6 10"><path d="M0.5 0 V10 L6 5 Z" fill="#8a8a8a"/></svg><svg style="position:absolute;left:384px;top:476px;" width="6" height="10" viewBox="0 0 6 10"><path d="M5.5 0 V10 L0 5 Z" fill="#8a8a8a"/></svg><div style="position:absolute;left:397px;top:473px;width:624px;height:17px;background:#c1c1c1"></div><svg style="position:absolute;left:1777px;top:476px;" width="6" height="10" viewBox="0 0 6 10"><path d="M0.5 0 V10 L6 5 Z" fill="#505050"/></svg><div style="position:absolute;left:8px;top:491px;width:1776px;height:29px;background:#eef1f5"></div><svg style="position:absolute;left:21px;top:498px;" width="13" height="17" viewBox="0 0 13 17"><rect x="0.5" y="0" width="2.5" height="17" fill="#999"/><path d="M12.5 0 V17 L3 8.5 Z" fill="#999"/></svg><svg style="position:absolute;left:48px;top:498px;" width="16" height="17" viewBox="0 0 16 17"><path d="M16 0 V17 L0.5 8.5 Z" fill="#999"/></svg><div style="position:absolute;left:79px;top:496px;width:31px;height:21px;box-sizing:border-box;border:1px solid #7f93a8;border-radius:5px;background:#fff"></div><div style="position:absolute;left:71.8px;width:30px;text-align:right;top:499.96px;font-size:16px;line-height:16px;font-weight:400;color:#333;white-space:nowrap;">1</div><div style="position:absolute;left:115px;top:500.26px;font-size:16px;line-height:16px;font-weight:400;color:#444;white-space:nowrap;">of 12</div><svg style="position:absolute;left:158px;top:498px;" width="17" height="17" viewBox="0 0 17 17"><path d="M0.5 0 V17 L16.5 8.5 Z" fill="#1862a8"/></svg><svg style="position:absolute;left:189px;top:498px;" width="13" height="17" viewBox="0 0 13 17"><path d="M0 0 V17 L9.5 8.5 Z" fill="#1862a8"/><rect x="9.5" y="0" width="2.5" height="17" fill="#1862a8"/></svg><div style="position:absolute;left:234px;top:494px;width:1px;height:25px;background:#9a9a9a"></div><div style="position:absolute;left:266px;top:494px;width:48px;height:24px;box-sizing:border-box;border:1px solid #767676;border-radius:2px;background:#fff"></div><div style="position:absolute;left:273px;top:500.26px;font-size:16px;line-height:16px;font-weight:400;color:#333;white-space:nowrap;">10</div><svg style="position:absolute;left:297px;top:503px;" width="12" height="7" viewBox="0 0 12 7"><path d="M1 1 L6 6 L11 1" stroke="#111" stroke-width="1.8" fill="none"/></svg><div style="position:absolute;left:325px;top:499.96px;font-size:16px;line-height:16px;font-weight:700;color:#000;white-space:nowrap;">Per Page</div><div style="position:absolute;left:1179.5px;width:600px;text-align:right;top:498.46px;font-size:16px;line-height:16px;font-weight:400;color:#444;white-space:nowrap;letter-spacing:0.18px">Record 1 of 118</div><div style="position:absolute;left:3px;top:520px;width:1781px;height:7px;background:#a9b9c8"></div><div style="position:absolute;left:3px;top:527px;width:1781px;height:1px;background:#a6a6a6"></div><div style="position:absolute;left:3px;top:528px;width:1781px;height:28px;background:#ececec"></div><svg style="position:absolute;left:11px;top:537px;" width="11" height="7" viewBox="0 0 11 7"><path d="M0.5 0.5 H10.5 L5.5 6 Z" fill="#444"/></svg><div style="position:absolute;left:32px;top:535.40px;font-size:13.7px;line-height:13.7px;font-weight:700;color:#000;white-space:nowrap;">BALANCE DETAILS</div><svg style="position:absolute;left:1493px;top:533px;" width="15" height="15" viewBox="0 0 15 15"><rect x="0" y="0" width="15" height="15" rx="3" fill="#9c9c9c"/><path d="M7.5 3 V12 M3 7.5 H12" stroke="#ececec" stroke-width="2.4"/></svg><div style="position:absolute;left:1513.5px;top:533.65px;font-size:14px;line-height:14px;font-weight:400;color:#a0a0a0;white-space:nowrap;">Insert</div><svg style="position:absolute;left:1570px;top:533px;" width="15" height="15" viewBox="0 0 15 15"><rect x="0" y="0" width="15" height="15" rx="3" fill="#9c9c9c"/><path d="M3 7.5 H12" stroke="#ececec" stroke-width="2.4"/></svg><div style="position:absolute;left:1590.5px;top:533.65px;font-size:14px;line-height:14px;font-weight:400;color:#a0a0a0;white-space:nowrap;">Delete</div><svg style="position:absolute;left:1653px;top:534px;" width="16" height="13" viewBox="0 0 16 13"><path d="M0 0 H8 V4 H6 V8 H0 Z" fill="#9c9c9c"/><rect x="6.5" y="4.5" width="9" height="8.5" fill="#9c9c9c"/></svg><div style="position:absolute;left:1673px;top:533.65px;font-size:14px;line-height:14px;font-weight:400;color:#a0a0a0;white-space:nowrap;">Copy</div><div style="position:absolute;left:1717px;top:529px;width:1px;height:22px;background:#d2d2d2"></div><svg style="position:absolute;left:1728px;top:533px;" width="16" height="15" viewBox="0 0 16 15"><path d="M0.8 1.5 L5.6 7 V12.2 H8.3 V7 L13.9 1.5 Z" fill="#9c9c9c"/><ellipse cx="7.35" cy="1.5" rx="6.1" ry="1.1" fill="#ececec" stroke="#9c9c9c" stroke-width="1"/><path d="M10.9 12.2 H15.2 L13 14.6 Z" fill="#9c9c9c"/></svg><div style="position:absolute;left:1748.5px;top:533.65px;font-size:14px;line-height:14px;font-weight:400;color:#a0a0a0;white-space:nowrap;">Filter</div><div style="position:absolute;left:3px;top:556px;width:1781px;height:6px;background:#a9b9c8"></div><div style="position:absolute;left:3px;top:556px;width:1781px;height:1px;background:#b8b8b8"></div><div style="position:absolute;left:3px;top:562px;width:5px;height:192px;background:#a9b9c8"></div><div style="position:absolute;left:8px;top:562px;width:1776px;height:192px;background:#f4f5f7;border-radius:3px 0 0 3px"></div><div style="position:absolute;left:3px;top:753px;width:1781px;height:6px;background:#a9b9c8"></div><div style="position:absolute;left:3px;top:759px;width:1781px;height:1px;background:#c9c9c9"></div><div style="position:absolute;left:3px;top:760px;width:1781px;height:5px;background:#ffffff"></div><div style="position:absolute;left:-436px;width:600px;text-align:right;top:571.80px;font-size:15px;line-height:15px;font-weight:700;color:#000;white-space:nowrap;">Amount Due</div><div style="position:absolute;left:184px;top:566px;width:160px;height:26px;box-sizing:border-box;border:1px solid #cdd3da;border-radius:3px;background:linear-gradient(#ececec,#fff 6px)"></div><div style="position:absolute;left:-261px;width:600px;text-align:right;top:571.30px;font-size:15px;line-height:15px;font-weight:400;color:#222;white-space:nowrap;">-10.00</div><div style="position:absolute;left:-436px;width:600px;text-align:right;top:603.80px;font-size:15px;line-height:15px;font-weight:700;color:#000;white-space:nowrap;">Account Balance</div><div style="position:absolute;left:184px;top:598px;width:160px;height:26px;box-sizing:border-box;border:1px solid #cdd3da;border-radius:3px;background:linear-gradient(#ececec,#fff 6px)"></div><div style="position:absolute;left:-261px;width:600px;text-align:right;top:603.30px;font-size:15px;line-height:15px;font-weight:400;color:#222;white-space:nowrap;">-10.00</div><div style="position:absolute;left:-436px;width:600px;text-align:right;top:635.80px;font-size:15px;line-height:15px;font-weight:700;color:#000;white-space:nowrap;">Query Balance</div><div style="position:absolute;left:184px;top:630px;width:160px;height:26px;box-sizing:border-box;border:1px solid #cdd3da;border-radius:3px;background:linear-gradient(#ececec,#fff 6px)"></div><div style="position:absolute;left:-261px;width:600px;text-align:right;top:635.30px;font-size:15px;line-height:15px;font-weight:400;color:#222;white-space:nowrap;">-10.00</div><div style="position:absolute;left:-436px;width:600px;text-align:right;top:668.80px;font-size:15px;line-height:15px;font-weight:700;color:#000;white-space:nowrap;">Memo Balance</div><div style="position:absolute;left:184px;top:663px;width:160px;height:26px;box-sizing:border-box;border:1px solid #cdd3da;border-radius:3px;background:linear-gradient(#ececec,#fff 6px)"></div><div style="position:absolute;left:-261px;width:600px;text-align:right;top:668.30px;font-size:15px;line-height:15px;font-weight:400;color:#222;white-space:nowrap;">0.00</div><div style="position:absolute;left:-436px;width:600px;text-align:right;top:700.80px;font-size:15px;line-height:15px;font-weight:700;color:#000;white-space:nowrap;">Authorized Aid</div><div style="position:absolute;left:184px;top:695px;width:160px;height:26px;box-sizing:border-box;border:1px solid #cdd3da;border-radius:3px;background:linear-gradient(#ececec,#fff 6px)"></div><div style="position:absolute;left:-261px;width:600px;text-align:right;top:700.30px;font-size:15px;line-height:15px;font-weight:400;color:#222;white-space:nowrap;">0.00</div><div style="position:absolute;left:-436px;width:600px;text-align:right;top:729.70px;font-size:15px;line-height:15px;font-weight:700;color:#000;white-space:nowrap;">Balance</div><div style="position:absolute;left:447px;width:600px;text-align:right;top:571.80px;font-size:15px;line-height:15px;font-weight:700;color:#000;white-space:nowrap;">NSF</div><div style="position:absolute;left:1067px;top:566px;width:62px;height:26px;box-sizing:border-box;border:1px solid #cdd3da;border-radius:3px;background:linear-gradient(#ececec,#fff 6px)"></div><div style="position:absolute;left:525px;width:600px;text-align:right;top:571.30px;font-size:15px;line-height:15px;font-weight:400;color:#222;white-space:nowrap;">0</div><div style="position:absolute;left:447px;width:600px;text-align:right;top:603.80px;font-size:15px;line-height:15px;font-weight:700;color:#000;white-space:nowrap;">Receipt?</div><div style="position:absolute;left:1067px;top:598px;width:62px;height:26px;box-sizing:border-box;border:1px solid #6f8193;border-radius:3px;background:#fff"></div><div style="position:absolute;left:1072px;top:603.76px;font-size:16px;line-height:16px;font-weight:400;color:#222;white-space:nowrap;">N</div><div style="position:absolute;left:447px;width:600px;text-align:right;top:669.80px;font-size:15px;line-height:15px;font-weight:700;color:#000;white-space:nowrap;">Housing Deposit</div><div style="position:absolute;left:1070px;top:670.26px;font-size:16px;line-height:16px;font-weight:400;color:#222;white-space:nowrap;">0.00</div><div style="position:absolute;left:447px;width:600px;text-align:right;top:701.60px;font-size:15px;line-height:15px;font-weight:700;color:#000;white-space:nowrap;">Tuition &amp; Other</div><div style="position:absolute;left:1070px;top:702.06px;font-size:16px;line-height:16px;font-weight:400;color:#222;white-space:nowrap;">0.00</div><div style="position:absolute;left:447px;width:600px;text-align:right;top:729.70px;font-size:15px;line-height:15px;font-weight:700;color:#000;white-space:nowrap;">Deposit</div><div style="position:absolute;left:3px;top:765px;width:1781px;height:1px;background:#b8b8b8"></div><div style="position:absolute;left:3px;top:766px;width:1781px;height:35px;background:#cccccc"></div><div style="position:absolute;left:56px;top:766px;width:1px;height:35px;background:#b5b5b5"></div><div style="position:absolute;left:111px;top:766px;width:1px;height:35px;background:#b5b5b5"></div><svg style="position:absolute;left:20px;top:774px;" width="18" height="16" viewBox="0 0 18 16"><rect x="0" y="0.5" width="18" height="3" fill="#6b6b6b"/><path d="M0.5 15.5 H17.5 L9 6 Z" fill="#6b6b6b"/></svg><svg style="position:absolute;left:75px;top:774px;" width="18" height="16" viewBox="0 0 18 16"><path d="M0.5 0.5 H17.5 L9 10 Z" fill="#6b6b6b"/><rect x="0" y="12.5" width="18" height="3" fill="#6b6b6b"/></svg><div style="position:absolute;left:137.5px;top:778.30px;font-size:15px;line-height:15px;font-weight:700;color:#000;white-space:nowrap;">Activity User</div><div style="position:absolute;left:239px;top:777.96px;font-size:16px;line-height:16px;font-weight:400;color:#222;white-space:nowrap;">A00</div><div style="position:absolute;left:264px;top:773px;width:58px;height:21px;background:linear-gradient(90deg,#b9b9b9,#a9a9a9 50%,#c0c0c0);border-radius:3px;filter:blur(0.8px)"></div><div style="position:absolute;left:1731px;top:766px;width:53px;height:35px;background:#0566c8"></div><div style="position:absolute;left:1744px;top:776.85px;font-size:14px;line-height:14px;font-weight:400;color:#fff;white-space:nowrap;">SAVE</div><svg style="position:absolute;left:870px;top:478px;" width="200" height="42" viewBox="0 0 200 42"><defs><filter id="sh" x="-10%" y="-30%" width="130%" height="180%"><feDropShadow dx="1" dy="2" stdDeviation="1.5" flood-color="#000" flood-opacity="0.35"/></filter></defs><g filter="url(#sh)"><path d="M12.5 22.3 L160 19.5" stroke="#0fae8c" stroke-width="10" stroke-linecap="round"/><path d="M158 5.5 L187.5 19.3 L158 35 Z" fill="#0fae8c"/></g></svg><div style="position:absolute;left:1091px;top:466px;width:427px;height:59px;box-sizing:border-box;border:6px solid #10ad8b;border-radius:9px;box-shadow:1px 2px 3px rgba(0,0,0,0.4), inset 2px 3px 3px rgba(0,0,0,0.4)"></div><div style="position:absolute;left:1107px;top:477.58px;font-size:27.2px;line-height:27.2px;font-weight:400;color:#000;white-space:nowrap;text-shadow:2px 3px 3px rgba(0,0,0,0.4)">Scroll over to view more columns</div><svg style="position:absolute;left:176px;top:234px;" width="14" height="21" viewBox="0 0 14 21"><path d="M1.5 1.5 V17.5 L5 14 L7.8 19.8 L10 18.8 L7.3 13.2 H12 Z" fill="#fff" stroke="#111" stroke-width="1" stroke-linejoin="miter"/></svg>
</body></html>
